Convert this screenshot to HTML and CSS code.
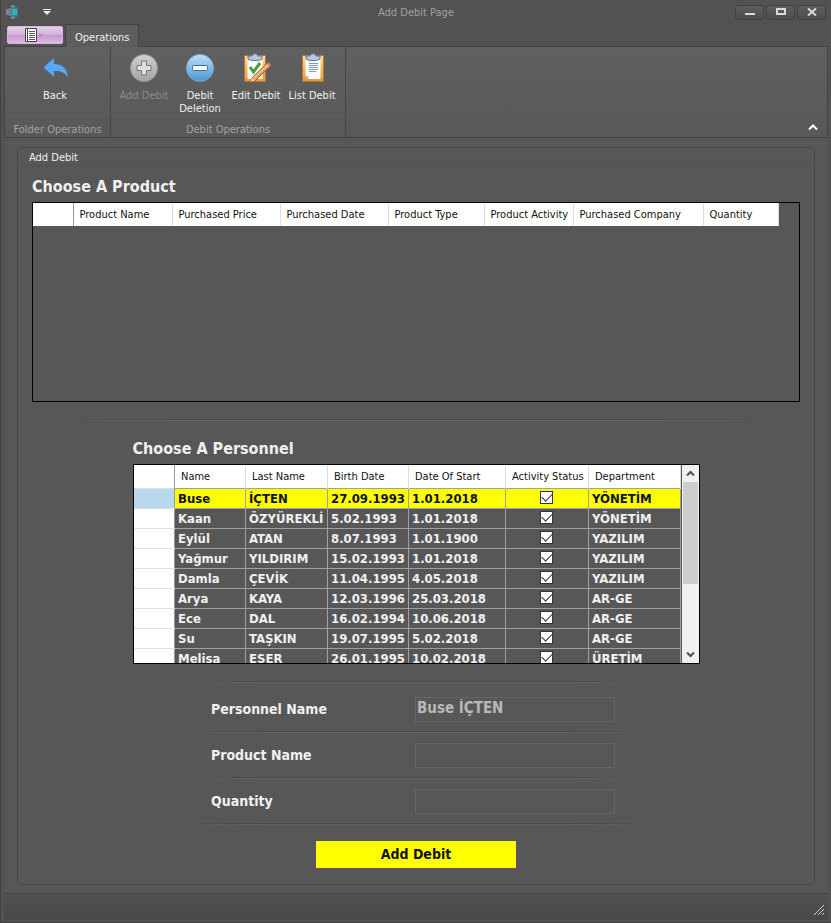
FILE: index.html
```html
<!DOCTYPE html>
<html lang="en">
<head>
<meta charset="utf-8">
<title>Add Debit Page</title>
<link rel="stylesheet" href="styles.css">
</head>
<body>
<div class="window">
  <header class="titlebar">
    <div class="quick">
      <svg class="app-icon" width="16" height="16" viewBox="0 0 16 16" aria-hidden="true">
        <path d="M1 5h3v6H1z" fill="#8a7d8e"/><path d="M6 1h4v3H6zM6 12h4v3H6z" fill="#7d8290"/>
        <path d="M4 4h3v8H4z" fill="#6d7f90"/><rect x="6" y="3" width="7" height="10" rx="2" fill="#2f8496"/><rect x="7" y="5" width="5" height="6" fill="#37b0b4"/>
      </svg>
      <button class="quick-menu" aria-label="Customize quick access">
        <svg width="8" height="6" viewBox="0 0 8 6"><path d="M0 0h8v1H0zM0 2h8L4 6z" fill="#e8e8e8"/></svg>
      </button>
    </div>
    <h1 class="window-title">Add Debit Page</h1>
    <div class="window-buttons">
      <button aria-label="Minimize"><svg width="10" height="8" viewBox="0 0 10 8"><path d="M0 5h10v2H0z" fill="#d8d8d8"/></svg></button>
      <button aria-label="Maximize"><svg width="10" height="8" viewBox="0 0 10 8"><path d="M1 1h8v5H1z" fill="none" stroke="#d8d8d8" stroke-width="2"/></svg></button>
      <button aria-label="Close"><svg width="10" height="8" viewBox="0 0 10 8"><path d="M1 .5 9 7.500M9 .5 1 7.500" stroke="#d8d8d8" stroke-width="2"/></svg></button>
    </div>
  </header>

  <nav class="tabs">
    <button class="file-button" aria-label="Application menu">
      <svg width="22" height="14" viewBox="0 0 22 14"><path d="M1.500.5h11v13h-11z" fill="#fff" stroke="#454045"/><path d="M3.500 1v12" stroke="#454045"/><path d="M5 3.500h6M5 5.500h6M5 7.500h6M5 9.500h6M5 11.500h6" stroke="#5a555a"/><path d="M15 5.500l2 2 2-2" fill="none" stroke="#9b6fa5"/></svg>
    </button>
    <button class="tab">Operations</button>
  </nav>

  <section class="ribbon">
    <div class="group group-folder">
      <div class="group-items">
        <button class="tool">
          <svg width="30" height="30" viewBox="0 0 30 30"><path d="M3.500 14.500 14 5v6C22 11 27 15 28 24c-4-5-8-6.500-14-6v6z" fill="#58a7f5"/></svg>
          <span>Back</span>
        </button>
      </div>
      <div class="group-caption">Folder Operations</div>
    </div>
    <div class="group">
      <div class="group-items">
        <button class="tool" disabled>
          <svg width="30" height="30" viewBox="0 0 30 30"><defs><linearGradient id="gray" x2="0" y2="1"><stop stop-color="#d0d0d0"/><stop offset="1" stop-color="#a5a5a5"/></linearGradient></defs><circle cx="15" cy="15" r="13.500" fill="url(#gray)" stroke="#999"/><path d="M12.500 8h5v4.500H22v5h-4.500V22h-5v-4.500H8v-5h4.500z" fill="#dedede" stroke="#777"/></svg>
          <span>Add Debit</span>
        </button>
        <button class="tool">
          <svg width="30" height="30" viewBox="0 0 30 30"><defs><linearGradient id="blue" x2="0" y2="1"><stop stop-color="#c4e0f5"/><stop offset=".5" stop-color="#82bce8"/><stop offset="1" stop-color="#4e93cb"/></linearGradient></defs><circle cx="15" cy="15" r="13.500" fill="url(#blue)" stroke="#7bb0dc"/><rect x="7.500" y="12.500" width="15" height="5" rx="1" fill="#f2f7fb" stroke="#3d6f99"/></svg>
          <span>Debit Deletion</span>
        </button>
        <button class="tool">
          <svg width="30" height="30" viewBox="0 0 30 30"><defs><linearGradient id="board" x2="0" y2="1"><stop stop-color="#ffdc9b"/><stop offset="1" stop-color="#e49638"/></linearGradient></defs><rect x="3.500" y="2.500" width="21" height="26" rx="1" fill="url(#board)" stroke="#b87930"/><path d="M6.500 5h15v21h-15z" fill="#fafbfd"/><path d="M7 3h4c0-3 6-3 6 0h4v3c-2 2-12 2-14 0z" fill="#b9c8df" stroke="#5d6f92"/><path d="M9 14l3.500 5 6.500-9" fill="none" stroke="#4c9c36" stroke-width="3"/><path d="M11.500 24.500 26.500 10l3 3-15 14.500-5 2z" fill="#e7a65c" stroke="#9a572e"/><path d="M12.500 25 27 11.500" stroke="#ffe1a8"/><path d="M26 10.500l1.500-1.500 3 3-1.500 1.500z" fill="#cf776a"/><path d="M10 28.500l1-3 3 2z" fill="#f3dfc7"/></svg>
          <span>Edit Debit</span>
        </button>
        <button class="tool">
          <svg width="30" height="30" viewBox="0 0 30 30"><rect x="5.500" y="2.500" width="21" height="26" rx="1" fill="url(#board)" stroke="#b87930"/><path d="M8.500 5h15v21h-12l-3-3z" fill="#fafbfd"/><path d="M8.500 23h3v3z" fill="#bac6da"/><path d="M9 3h4c0-3 6-3 6 0h4v3c-2 2-12 2-14 0z" fill="#b9c8df" stroke="#5d6f92"/><path d="M12 10.500h9M12 12.500h9M12 14.500h9M12 16.500h9M12 18.500h7" stroke="#8398bc"/></svg>
          <span>List Debit</span>
        </button>
      </div>
      <div class="group-caption">Debit Operations</div>
    </div>
    <button class="collapse" aria-label="Collapse ribbon"><svg width="12" height="8" viewBox="0 0 12 8"><path d="M2 6.500 6 2.500l4 4" fill="none" stroke="#fff" stroke-width="2"/></svg></button>
  </section>

  <main class="content">
    <section class="panel">
      <div class="panel-title">Add Debit</div>
      <div class="panel-body">
        <h2>Choose A Product</h2>
        <div class="grid product-grid">
          <table class="products">
            <colgroup><col class="c40"><col class="c99"><col class="c108"><col class="c108"><col class="c96"><col class="c89"><col class="c130"><col class="c75"></colgroup>
            <thead><tr><th></th><th>Product Name</th><th>Purchased Price</th><th>Purchased Date</th><th>Product Type</th><th>Product Activity</th><th>Purchased Company</th><th>Quantity</th></tr></thead>
          </table>
        </div>
        <hr class="wide">
        <div class="personnel">
          <h2>Choose A Personnel</h2>
          <div class="grid personnel-grid">
            <table class="people">
              <colgroup><col class="c41"><col class="c71"><col class="c82"><col class="c81"><col class="c97"><col class="c83"><col class="c92"></colgroup>
              <thead><tr><th></th><th>Name</th><th>Last Name</th><th>Birth Date</th><th>Date Of Start</th><th>Activity Status</th><th>Department</th></tr></thead>
              <tbody>
                <tr class="selected"><th></th><td>Buse</td><td>İÇTEN</td><td>27.09.1993</td><td>1.01.2018</td><td class="check"><input type="checkbox" checked aria-label="Active"></td><td>YÖNETİM</td></tr>
                <tr><th></th><td>Kaan</td><td>ÖZYÜREKLİ</td><td>5.02.1993</td><td>1.01.2018</td><td class="check"><input type="checkbox" checked aria-label="Active"></td><td>YÖNETİM</td></tr>
                <tr><th></th><td>Eylül</td><td>ATAN</td><td>8.07.1993</td><td>1.01.1900</td><td class="check"><input type="checkbox" checked aria-label="Active"></td><td>YAZILIM</td></tr>
                <tr><th></th><td>Yağmur</td><td>YILDIRIM</td><td>15.02.1993</td><td>1.01.2018</td><td class="check"><input type="checkbox" checked aria-label="Active"></td><td>YAZILIM</td></tr>
                <tr><th></th><td>Damla</td><td>ÇEVİK</td><td>11.04.1995</td><td>4.05.2018</td><td class="check"><input type="checkbox" checked aria-label="Active"></td><td>YAZILIM</td></tr>
                <tr><th></th><td>Arya</td><td>KAYA</td><td>12.03.1996</td><td>25.03.2018</td><td class="check"><input type="checkbox" checked aria-label="Active"></td><td>AR-GE</td></tr>
                <tr><th></th><td>Ece</td><td>DAL</td><td>16.02.1994</td><td>10.06.2018</td><td class="check"><input type="checkbox" checked aria-label="Active"></td><td>AR-GE</td></tr>
                <tr><th></th><td>Su</td><td>TAŞKIN</td><td>19.07.1995</td><td>5.02.2018</td><td class="check"><input type="checkbox" checked aria-label="Active"></td><td>AR-GE</td></tr>
                <tr><th></th><td>Melisa</td><td>ESER</td><td>26.01.1995</td><td>10.02.2018</td><td class="check"><input type="checkbox" checked aria-label="Active"></td><td>ÜRETİM</td></tr>
              </tbody>
            </table>
            <div class="scrollbar">
              <button aria-label="Scroll up"><svg width="9" height="7" viewBox="0 0 9 7"><path d="M1 5.500 4.500 2 8 5.500" fill="none" stroke="#505050" stroke-width="2"/></svg></button>
              <div class="track"><div class="thumb"></div></div>
              <button aria-label="Scroll down"><svg width="9" height="7" viewBox="0 0 9 7"><path d="M1 1.500 4.500 5 8 1.500" fill="none" stroke="#505050" stroke-width="2"/></svg></button>
            </div>
          </div>
        </div>
        <form class="form">
          <hr>
          <div class="field"><label for="person">Personnel Name</label><input id="person" type="text" value="Buse İÇTEN" disabled></div>
          <hr>
          <div class="field"><label for="product">Product Name</label><input id="product" type="text" disabled></div>
          <hr>
          <div class="field"><label for="quantity">Quantity</label><input id="quantity" type="text"></div>
          <hr>
          <button class="submit" type="button">Add Debit</button>
        </form>
      </div>
    </section>
  </main>

  <footer class="statusbar">
    <svg width="12" height="12" viewBox="0 0 12 12" aria-hidden="true"><path d="M1 11 11 1M5 11l6-6M9 11l2-2" stroke="#d5d5d5" stroke-width="1"/></svg>
  </footer>
</div>
</body>
</html>
```

FILE: styles.css
```css
* { box-sizing: border-box; }

body {
  margin: 0;
  background: #575757;
  color: #f0f0f0;
  font: 11px/13px "DejaVu Sans Condensed", "Open Sans", sans-serif;
}

button {
  margin: 0;
  padding: 0;
  border: 0;
  background: none;
  color: inherit;
  font: inherit;
}

svg { display: block; }

.window {
  display: flex;
  flex-direction: column;
  min-height: 100vh;
  padding: 0 3px 2px;
  border: solid #424242;
  border-width: 0 0 1px 1px;
  background: #525252;
}

.titlebar {
  display: grid;
  grid-template-columns: 1fr auto 1fr;
  align-items: center;
  height: 24px;
}

.quick { display: flex; align-items: center; gap: 22px; padding-left: 1px; }
.window-title { margin: 0; font-size: 11px; font-weight: 400; color: #a0a0a0; }
.window-buttons { display: flex; justify-content: flex-end; gap: 2px; padding-right: 2px; }
.window-buttons button {
  display: grid;
  place-items: center;
  width: 29px;
  height: 15px;
  border: 1px solid #424242;
  border-radius: 3px;
  background: linear-gradient(#5c5c5c, #4f4f4f);
}

.tabs { display: flex; height: 22px; padding-left: 3px; gap: 2px; }
.file-button {
  display: grid;
  place-items: center;
  width: 56px;
  height: 18px;
  margin-top: 2px;
  border: 1px solid #d7b4de;
  border-radius: 2px;
  background: linear-gradient(#e6d0ea, #d3afdb 50%, #c494cf 51%, #dcbce3);
}
.tab {
  position: relative;
  height: 23px;
  padding: 2px 9px 0;
  border: 1px solid #434343;
  border-bottom: 0;
  background: #5d5d5d;
}

.ribbon {
  display: flex;
  height: 92px;
  border: 1px solid #434343;
  background: linear-gradient(#606060, #585858);
}
.group { display: flex; flex-direction: column; min-width: 235px; border-right: 1px solid #444; }
.group-folder { min-width: 106px; }
.group-items { display: flex; flex: 1; padding: 6px 5px 0; }
.group-folder .group-items { padding-left: 22px; }
.tool { display: flex; flex-direction: column; align-items: center; width: 56px; gap: 6px; }
.tool:disabled { color: #8b8b8b; }
.group-caption {
  height: 18px;
  padding-top: 3px;
  border-top: 1px solid #555;
  text-align: center;
  color: #a3a3a3;
}
.collapse { margin: auto 8px 6px auto; }

.content { flex: 1; display: flex; padding: 9px 13px 8px; background: #575757; }
.panel {
  flex: 1;
  min-width: 0;
  border: 1px solid #484848;
  border-radius: 3px;
}
.panel-title { height: 18px; padding: 3px 11px; border-bottom: 1px solid #515151; }
.panel-body { padding: 11px 14px 16px; }

h2 { margin: 0; font-size: 16px; line-height: 20px; font-weight: 700; }

.grid { border: 1px solid #000; overflow: hidden; }
.product-grid { height: 200px; margin-top: 5px; }
.personnel-grid { display: flex; height: 200px; margin-top: 5px; }

table { table-layout: fixed; border-collapse: collapse; }
.products { width: 745px; }
.people { width: 547px; }
.c40 { width: 40px; }
.c41 { width: 41px; }
.c71 { width: 71px; }
.c75 { width: 75px; }
.c81 { width: 81px; }
.c82 { width: 82px; }
.c83 { width: 83px; }
.c89 { width: 89px; }
.c92 { width: 92px; }
.c96 { width: 96px; }
.c97 { width: 97px; }
.c99 { width: 99px; }
.c108 { width: 108px; }
.c130 { width: 130px; }

thead th {
  height: 23px;
  padding: 0 0 0 6px;
  border-right: 1px solid #dedede;
  background: #fff;
  color: #111;
  font-weight: 400;
  text-align: left;
  white-space: nowrap;
}
thead th:first-child { border-right-color: #999; }

tbody th { background: #fff; border: 1px solid #dedede; border-left: 0; border-right-color: #999; }
td {
  height: 20px;
  padding: 0 0 0 3px;
  border: 1px solid #a0a0a0;
  font-size: 13px;
  line-height: 17px;
  font-weight: 700;
  white-space: nowrap;
}
.selected td { background: #ff0; color: #111; }
.selected th { background: #b8d8f0; }
.check { padding: 0 1px 2px 0; }

td input {
  appearance: none;
  position: relative;
  display: block;
  width: 13px;
  height: 13px;
  margin: 0 auto;
  border: 1px solid #333;
  background: #fff;
}
td input:checked::after {
  content: "";
  position: absolute;
  left: 1px;
  top: 1px;
  width: 9px;
  height: 5px;
  border: solid #333;
  border-width: 0 0 1px 1px;
  transform: rotate(-45deg);
}

.scrollbar {
  display: flex;
  flex-direction: column;
  width: 17px;
  margin-left: auto;
  background: #f0f0f0;
}
.scrollbar button { display: grid; place-items: center; height: 17px; }
.track { flex: 1; padding: 0 1px; }
.thumb { height: 102px; background: #cdcdcd; }

hr {
  width: 100%;
  height: 2px;
  margin: 0;
  border: 0;
  background:
    linear-gradient(90deg, transparent, #484848 20%, #484848 80%, transparent) top / 100% 1px no-repeat,
    linear-gradient(90deg, transparent, #626262 20%, #626262 80%, transparent) bottom / 100% 1px no-repeat;
}
hr.wide { margin: 17px 0 18px; }

.personnel { max-width: 567px; margin: 0 auto 17px; }

.form { display: flex; flex-direction: column; align-items: center; max-width: 490px; margin: 0 auto; }
.field {
  display: flex;
  align-items: center;
  align-self: flex-start;
  justify-content: space-between;
  width: 444px;
  max-width: 100%;
  height: 44px;
  padding-left: 40px;
}
.field:first-of-type { height: 48px; padding-top: 4px; }
.field label { font-size: 14px; font-weight: 700; }
.field input {
  width: 200px;
  height: 25px;
  padding: 0 1px 2px;
  border: 1px solid #666;
  background: #575757;
  color: #b8b8b8;
  font: 700 15px/20px "DejaVu Sans Condensed", "Open Sans", sans-serif;
}
.submit {
  width: 200px;
  height: 27px;
  margin-top: 16px;
  background: #ff0;
  color: #111;
  font-size: 14px;
  font-weight: 700;
}

.statusbar {
  display: flex;
  justify-content: flex-end;
  align-items: flex-end;
  height: 27px;
  padding: 4px 3px;
  border-top: 1px solid #444;
  background: linear-gradient(#505050, #484848);
}
```
